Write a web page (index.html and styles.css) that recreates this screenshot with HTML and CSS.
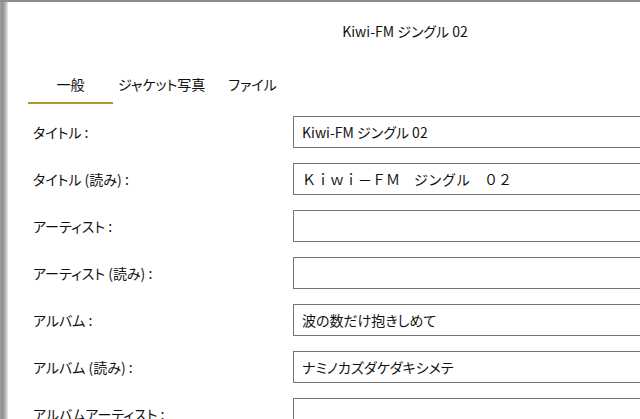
FILE: index.html
```html
<!DOCTYPE html>
<html lang="ja">
<head>
<meta charset="utf-8">
<title>Kiwi-FM ジングル 02</title>
<link rel="stylesheet" href="styles.css">
</head>
<body>
<div class="frame">
  <div class="shadow"></div>
  <div class="window">
    <div class="title">Kiwi-FM ジングル 02</div>
    <div class="tabs">
      <div class="tab tab-active">一般</div>
      <div class="tab tab-jacket">ジャケット写真</div>
      <div class="tab tab-file">ファイル</div>
    </div>
    <div class="form">
      <div class="label">タイトル :</div>
      <input class="field" type="text" value="Kiwi-FM ジングル 02">
      <div class="label">タイトル (読み) :</div>
      <input class="field field-wide" type="text" value="Ｋｉｗｉ－ＦＭ　ジングル　０２">
      <div class="label">アーティスト :</div>
      <input class="field" type="text" value="">
      <div class="label">アーティスト (読み) :</div>
      <input class="field" type="text" value="">
      <div class="label">アルバム :</div>
      <input class="field" type="text" value="波の数だけ抱きしめて">
      <div class="label">アルバム (読み) :</div>
      <input class="field" type="text" value="ナミノカズダケダキシメテ">
      <div class="label">アルバムアーティスト :</div>
      <input class="field" type="text" value="">
    </div>
  </div>
</div>
</body>
</html>
```
FILE: styles.css
```css
html, body {
  margin: 0;
  padding: 0;
  overflow: hidden;
  background: #ffffff;
}
body {
  width: 640px;
  height: 419px;
  font-family: "Noto Sans CJK JP", "Noto Sans", sans-serif;
  font-size: 14px;
  color: #111;
  font-feature-settings: "palt";
}
.frame {
  display: flex;
  width: 802px;
  height: 419px;
  border-top: 2px solid #8c8c8c;
}
.shadow {
  width: 8px;
  flex: none;
  background: linear-gradient(to right, #a0a0a0 0%, #8f8f8f 35%, #c0c0c0 75%, #eeeeee 100%);
}
.window {
  flex: 1;
  background: #fff;
  display: flex;
  flex-direction: column;
}
.title {
  padding-top: 19px;
  line-height: 20px;
  text-align: center;
}
.tabs {
  display: flex;
  margin-top: 33px;
  padding-left: 20px;
}
.tab {
  line-height: 20px;
  padding-bottom: 8px;
  border-bottom: 2px solid transparent;
}
.tab-active {
  width: 85px;
  text-align: center;
  border-bottom-color: #b8922e;
}
.tab-jacket {
  margin-left: 5px;
}
.tab-file {
  margin-left: 23px;
}
.form {
  display: grid;
  grid-template-columns: 260px 1fr;
  row-gap: 15px;
  margin-top: 12px;
  padding-left: 25px;
  padding-right: 25px;
  align-items: center;
}
.label {
  line-height: 20px;
  white-space: nowrap;
}
.field {
  height: 32px;
  box-sizing: border-box;
  border: 1px solid #767676;
  border-radius: 0;
  padding: 0 8px;
  margin: 0;
  font-family: "Noto Sans CJK JP", "Noto Sans", sans-serif;
  font-size: 14px;
  color: #111;
  background: #fff;
  outline: none;
  font-feature-settings: "palt";
}
.field-wide {
  font-feature-settings: normal;
}
```
